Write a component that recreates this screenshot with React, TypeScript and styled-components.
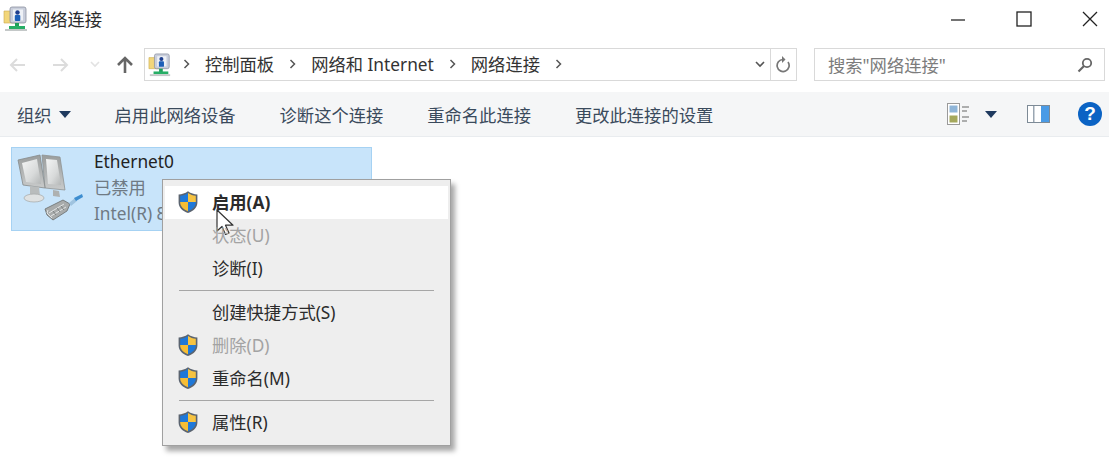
import styled, { createGlobalStyle } from "styled-components";

const GlobalStyle = createGlobalStyle`
  html, body {
    margin: 0;
    padding: 0;
    background: #fff;
  }
  body {
    font-family: "Noto Sans", "Noto Sans CJK SC", sans-serif;
    color: #2b2b2b;
  }
`;

const NetworkIcon = ({ size = 26 }: { size?: number }) => (
  <svg width={size} height={size} viewBox="0 0 26 26">
    <path d="M1 5h9l2 2v10H1z" fill="#f2d67a" stroke="#c9a94e" strokeWidth="0.6" />
    <rect x="7" y="1" width="16" height="16" rx="2" fill="#c9cedb" stroke="#8a90a0" strokeWidth="0.8" />
    <rect x="10" y="3.5" width="10" height="11" fill="#eef1f6" />
    <circle cx="14.5" cy="6.5" r="2.2" fill="#1f3f8f" />
    <rect x="11.8" y="9" width="5.5" height="6" rx="1" fill="#1d5fb8" />
    <rect x="12" y="17" width="4" height="4" fill="#1fa05a" />
    <rect x="6" y="20" width="16" height="3" fill="#27ae66" />
    <rect x="2" y="23" width="22" height="2" fill="#c4c8c8" />
  </svg>
);

const ShieldIcon = () => (
  <svg width="22" height="24" viewBox="0 0 22 24">
    <path d="M11 1.2C8 3.4 5 4.2 1.6 4.4v8c0 5 4 8.6 9.4 10.6 5.4-2 9.4-5.6 9.4-10.6v-8C17 4.2 14 3.4 11 1.2z" fill="#5b6470" />
    <path d="M11 3v9H3.2V5.8C6 5.5 8.6 4.7 11 3z" fill="#1f78d8" />
    <path d="M11 3c2.4 1.7 5 2.5 7.8 2.8V12H11z" fill="#f6c342" />
    <path d="M3.2 12H11v9.2c-4.4-1.8-7.8-4.8-7.8-8.8z" fill="#f6bd35" />
    <path d="M11 12h7.8v.4c0 4-3.4 7-7.8 8.8z" fill="#1f78d8" />
  </svg>
);

const Cursor = () => (
  <svg width="20" height="28" viewBox="0 0 20 28">
    <path d="M2 1v21l5-4.5 3.5 8 3.5-1.5-3.5-7.8H18z" fill="#fff" stroke="#333" strokeWidth="1.2" strokeLinejoin="round" />
  </svg>
);

const PcIcon = () => (
  <svg width="70" height="72" viewBox="0 0 70 72">
    <defs>
      <linearGradient id="pcScreen" x1="0" y1="0" x2="1" y2="1">
        <stop offset="0" stopColor="#f4f5f5" />
        <stop offset="0.6" stopColor="#d8dada" />
        <stop offset="1" stopColor="#b3b6b6" />
      </linearGradient>
      <linearGradient id="pcFrame" x1="0" y1="0" x2="0" y2="1">
        <stop offset="0" stopColor="#9a9d9d" />
        <stop offset="1" stopColor="#c8caca" />
      </linearGradient>
    </defs>
    <path d="M25 2l18 2 5 33-20-2z" fill="url(#pcFrame)" stroke="#8f9393" strokeWidth="0.8" />
    <path d="M29 6l11 1 4 25-13-1z" fill="url(#pcScreen)" />
    <path d="M36 37l6 1 1 6-7-1z" fill="#aeb1b1" />
    <path d="M1 7l22-5 5 33-22-3z" fill="url(#pcFrame)" stroke="#858989" strokeWidth="0.8" />
    <path d="M5 10l15-4 4 25-15-2z" fill="url(#pcScreen)" />
    <path d="M13 33l9 1 1 9-10-1z" fill="#b9bcbc" />
    <ellipse cx="17" cy="45" rx="10" ry="4" fill="#dfe1e1" stroke="#a9adad" strokeWidth="0.8" />
    <path d="M30 62l-2-6 18-9 7 4-3 7-14 9z" fill="#a8abab" stroke="#686c6c" strokeWidth="0.8" />
    <path d="M32 60l15-9M34 63l15-9M31 57l-1 3 5 5" stroke="#e8eaea" strokeWidth="0.9" fill="none" />
    <path d="M36 58l3 4M40 55l3 4M44 53l3 4" stroke="#6f7373" strokeWidth="0.8" />
    <path d="M52 50l6-5 2 3-6 5z" fill="#9fc3df" />
    <path d="M57 45l8-4 1 3-7 4z" fill="#3e8ed0" />
  </svg>
);

const Arrow = ({ dir, color, weight = 2 }: { dir: "left" | "right" | "up"; color: string; weight?: number }) => {
  const paths = {
    left: "M17 10H3M9 4l-6 6 6 6",
    right: "M3 10h14M11 4l6 6-6 6",
    up: "M10 18V3M3 10l7-7 7 7",
  };
  return (
    <svg width="20" height="20" viewBox="0 0 20 20" fill="none">
      <path d={paths[dir]} stroke={color} strokeWidth={weight} />
    </svg>
  );
};

const Chevron = ({ color = "#a9a9a9", w = 10 }: { color?: string; w?: number }) => (
  <svg width={w} height="7" viewBox="0 0 10 7" fill="none">
    <path d="M1 1l4 4 4-4" stroke={color} strokeWidth="1.6" />
  </svg>
);

const Sep = () => (
  <svg width="7" height="10" viewBox="0 0 7 10" fill="none">
    <path d="M1.5 1l4 4-4 4" stroke="#555" strokeWidth="1.5" />
  </svg>
);

const Caret = () => (
  <svg width="12" height="7" viewBox="0 0 12 7">
    <path d="M0 0h12L6 7z" fill="#1f3a5f" />
  </svg>
);

const ViewIcon = () => (
  <svg width="23" height="22" viewBox="0 0 23 22">
    <rect x="0.5" y="0.5" width="12" height="21" fill="#fff" stroke="#9a9a9a" />
    <rect x="2.5" y="2.5" width="8" height="7" fill="#8fb5d8" />
    <rect x="2.5" y="12.5" width="8" height="7" fill="#a5a85c" />
    <path d="M15 4h7M15 8h5M15 14h7M15 18h5" stroke="#666" strokeWidth="1.2" />
  </svg>
);

const PaneIcon = () => (
  <svg width="23" height="18" viewBox="0 0 23 18">
    <rect x="0.5" y="0.5" width="22" height="17" fill="#fff" stroke="#7d8a96" />
    <rect x="6" y="1" width="1.5" height="16" fill="#9aa6b2" />
    <rect x="14" y="1" width="8" height="16" fill="#4a9be6" />
  </svg>
);

const App = () => {
  return (
    <Window>
      <GlobalStyle />
      <TitleBar>
        <TitleLeft>
          <NetworkIcon />
          <span>网络连接</span>
        </TitleLeft>
        <WindowButtons>
          <svg width="16" height="16" viewBox="0 0 16 16">
            <path d="M1 9h14" stroke="#444" strokeWidth="1.5" />
          </svg>
          <svg width="16" height="16" viewBox="0 0 16 16" fill="none">
            <rect x="1" y="1" width="14" height="14" stroke="#222" strokeWidth="1.3" />
          </svg>
          <svg width="16" height="16" viewBox="0 0 16 16" fill="none">
            <path d="M1 1l14 14M15 1L1 15" stroke="#222" strokeWidth="1.3" />
          </svg>
        </WindowButtons>
      </TitleBar>

      <NavRow>
        <NavButtons>
          <Arrow dir="left" color="#dcdcdc" />
          <Arrow dir="right" color="#dcdcdc" />
          <Chevron color="#e2e2e2" />
          <Arrow dir="up" color="#666" weight={2.6} />
        </NavButtons>
        <AddressBar>
          <NetworkIcon size={24} />
          <Crumbs>
            <Sep />
            <span>控制面板</span>
            <Sep />
            <span>网络和 Internet</span>
            <Sep />
            <span>网络连接</span>
            <Sep />
          </Crumbs>
          <AddressEnd>
            <Chevron color="#555" w={12} />
          </AddressEnd>
          <RefreshBox>
            <svg width="16" height="18" viewBox="0 0 16 18" fill="none">
              <path d="M12 6a6 6 0 1 1-5-2.5" stroke="#777" strokeWidth="1.7" />
              <path d="M6 0v7l3.5-3.5z" fill="#777" />
            </svg>
          </RefreshBox>
        </AddressBar>
        <SearchBox>
          <span>搜索"网络连接"</span>
          <svg width="16" height="16" viewBox="0 0 16 16" fill="none">
            <circle cx="10" cy="6" r="4.2" stroke="#666" strokeWidth="1.8" />
            <path d="M7 9l-5.5 5.5" stroke="#666" strokeWidth="2.2" />
          </svg>
        </SearchBox>
      </NavRow>

      <Toolbar>
        <ToolItem>
          组织
          <Caret />
        </ToolItem>
        <ToolItem>启用此网络设备</ToolItem>
        <ToolItem>诊断这个连接</ToolItem>
        <ToolItem>重命名此连接</ToolItem>
        <ToolItem>更改此连接的设置</ToolItem>
        <ToolRight>
          <ViewIcon />
          <Caret />
          <PaneSlot>
            <PaneIcon />
          </PaneSlot>
          <HelpBadge>?</HelpBadge>
        </ToolRight>
      </Toolbar>

      <Content>
        <ConnectionCard>
          <PcIcon />
          <ConnectionText>
            <ConnectionName>Ethernet0</ConnectionName>
            <ConnectionMeta>已禁用</ConnectionMeta>
            <ConnectionMeta>Intel(R) 82574L</ConnectionMeta>
          </ConnectionText>
        </ConnectionCard>
      </Content>

      <ContextMenu>
        <MenuRow $hot $bold>
          <MenuIcon><ShieldIcon /></MenuIcon>启用(A)
          <CursorSpot><Cursor /></CursorSpot>
        </MenuRow>
        <MenuRow $disabled>
          <MenuIcon />状态(U)
        </MenuRow>
        <MenuRow>
          <MenuIcon />诊断(I)
        </MenuRow>
        <MenuDivider />
        <MenuRow>
          <MenuIcon />创建快捷方式(S)
        </MenuRow>
        <MenuRow $disabled>
          <MenuIcon><ShieldIcon /></MenuIcon>删除(D)
        </MenuRow>
        <MenuRow>
          <MenuIcon><ShieldIcon /></MenuIcon>重命名(M)
        </MenuRow>
        <MenuDivider />
        <MenuRow>
          <MenuIcon><ShieldIcon /></MenuIcon>属性(R)
        </MenuRow>
      </ContextMenu>
    </Window>
  );
};

export default App;

const Window = styled.div`
  position: relative;
  width: 1109px;
  height: 464px;
  overflow: hidden;
  background: #fff;
  font-size: 17.3px;
`;

const TitleBar = styled.div`
  height: 37px;
  display: flex;
  align-items: center;
  justify-content: space-between;
  padding: 0 11px 0 3px;
`;

const TitleLeft = styled.div`
  display: flex;
  align-items: center;
  gap: 4px;
`;

const WindowButtons = styled.div`
  display: flex;
  align-items: center;
  gap: 50px;
`;

const NavRow = styled.div`
  height: 33px;
  margin-top: 11px;
  display: flex;
  align-items: center;
  padding-right: 4px;
`;

const NavButtons = styled.div`
  width: 144px;
  display: grid;
  grid-template-columns: 36px 48px 22px 38px;
  justify-items: center;
  align-items: center;
`;

const AddressBar = styled.div`
  width: 653px;
  height: 33px;
  box-sizing: border-box;
  border: 1px solid #d9d9d9;
  display: flex;
  align-items: center;
  padding-left: 3px;
`;

const Crumbs = styled.div`
  flex: 1;
  display: flex;
  align-items: center;
  gap: 15px;
  padding: 0 0 2px 11px;
  color: #333;
`;

const AddressEnd = styled.div`
  width: 26px;
  padding-left: 6px;
  box-sizing: border-box;
  display: flex;
  justify-content: center;
`;

const RefreshBox = styled.div`
  width: 25px;
  height: 100%;
  border-left: 1px solid #d9d9d9;
  display: flex;
  align-items: center;
  justify-content: center;
`;

const SearchBox = styled.div`
  margin-left: 17px;
  width: 291px;
  height: 33px;
  box-sizing: border-box;
  border: 1px solid #d9d9d9;
  display: flex;
  align-items: center;
  justify-content: space-between;
  padding: 0 11px 0 13px;
  color: #7c7c7c;
`;

const Toolbar = styled.div`
  height: 45px;
  margin-top: 11px;
  background: #f5f6f7;
  border-bottom: 1px solid #e9ecef;
  box-sizing: border-box;
  display: flex;
  align-items: center;
  gap: 44px;
  padding: 0 7px 0 17px;
  color: #3a4a5c;
`;

const ToolItem = styled.div`
  display: flex;
  align-items: center;
  gap: 7px;
`;

const ToolRight = styled.div`
  margin-left: auto;
  display: flex;
  align-items: center;
  gap: 15px;
`;

const PaneSlot = styled.div`
  display: flex;
  margin-left: 15px;
  margin-right: 13px;
`;

const HelpBadge = styled.div`
  width: 24px;
  height: 24px;
  border-radius: 50%;
  background: #0b63c4;
  color: #fff;
  font-family: "Liberation Sans", sans-serif;
  font-weight: 700;
  font-size: 19px;
  display: flex;
  align-items: center;
  justify-content: center;
`;

const Content = styled.div`
  padding: 10px 11px;
`;

const ConnectionCard = styled.div`
  width: 361px;
  height: 84px;
  box-sizing: border-box;
  background: #c8e4fa;
  border: 1px solid #a6d2f3;
  display: flex;
  align-items: center;
  gap: 7px;
  padding-left: 5px;
`;

const ConnectionText = styled.div`
  display: flex;
  flex-direction: column;
  padding-bottom: 2px;
`;

const ConnectionName = styled.span`
  line-height: 26px;
  color: #222;
`;

const ConnectionMeta = styled.span`
  line-height: 26px;
  color: #6f7a84;
`;

const ContextMenu = styled.div`
  position: absolute;
  left: 162px;
  top: 179px;
  width: 289px;
  height: 267px;
  box-sizing: border-box;
  padding: 6px 2px;
  background: #eeeeee;
  border: 1px solid #a0a0a0;
  box-shadow: 4px 5px 5px rgba(0, 0, 0, 0.35);
`;

const MenuRow = styled.div<{ $hot?: boolean; $bold?: boolean; $disabled?: boolean }>`
  position: relative;
  height: 33px;
  box-sizing: border-box;
  padding-bottom: 2px;
  display: flex;
  align-items: center;
  background: ${({ $hot }) => ($hot ? "#fff" : "transparent")};
  font-weight: ${({ $bold }) => ($bold ? 700 : 400)};
  color: ${({ $disabled }) => ($disabled ? "#a3a3a3" : "#2b2b2b")};
`;

const MenuIcon = styled.span`
  width: 47px;
  padding-left: 12px;
  box-sizing: border-box;
  display: flex;
  align-items: center;
`;

const CursorSpot = styled.span`
  position: absolute;
  left: 50px;
  top: 23px;
  display: flex;
`;

const MenuDivider = styled.div`
  height: 1px;
  margin: 5px 14px;
  background: #a6a6a6;
`;
